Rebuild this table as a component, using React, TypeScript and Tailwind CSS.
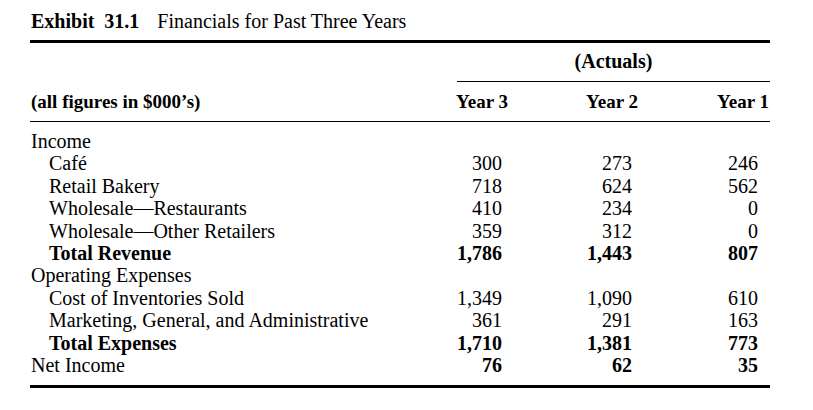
import React from 'react';

/* ---------- Data -------------------------------------------------- */
type Row = {
  label: string;
  indent?: boolean;
  boldLabel?: boolean;
  boldValues?: boolean;
  values?: [string, string, string];
};

const rows: Row[] = [
  { label: 'Income' },
  { label: 'Café', indent: true, values: ['300', '273', '246'] },
  { label: 'Retail Bakery', indent: true, values: ['718', '624', '562'] },
  { label: 'Wholesale—Restaurants', indent: true, values: ['410', '234', '0'] },
  { label: 'Wholesale—Other Retailers', indent: true, values: ['359', '312', '0'] },
  { label: 'Total Revenue', indent: true, boldLabel: true, boldValues: true, values: ['1,786', '1,443', '807'] },
  { label: 'Operating Expenses' },
  { label: 'Cost of Inventories Sold', indent: true, values: ['1,349', '1,090', '610'] },
  { label: 'Marketing, General, and Administrative', indent: true, values: ['361', '291', '163'] },
  { label: 'Total Expenses', indent: true, boldLabel: true, boldValues: true, values: ['1,710', '1,381', '773'] },
  { label: 'Net Income', boldValues: true, values: ['76', '62', '35'] },
];

// right padding per value column (Year 3, Year 2, Year 1)
const valuePad = ['pr-[7px]', 'pr-[7px]', 'pr-[12px]'];

/* ---------- Component -------------------------------------------- */
export default function App() {
  return (
    <div className="w-[813px] h-[410px] bg-white text-black font-['Liberation_Serif',serif] text-[20px] leading-[22px]">
      <div className="ml-[30px] w-[740px] pt-[10px]">
        {/* title */}
        <div className="pl-[1px]">
          <span className="font-bold">Exhibit&nbsp; 31.1</span>
          <span className="ml-[18px]">Financials for Past Three Years</span>
        </div>
        <div className="mt-[8px] h-[3px] bg-black" />

        {/* header */}
        <div className="grid grid-cols-[427px_52px_130px_131px]">
          <div className="col-start-2 col-span-3 mt-[7px] pb-[9px] border-b border-black text-center font-bold">
            (Actuals)
          </div>
        </div>
        <div className="grid grid-cols-[427px_52px_130px_131px] pt-[9px] pb-[8px] border-b border-black font-bold text-[19px]">
          <div className="pl-[1px]">(all figures in $000’s)</div>
          <div className="flex justify-end whitespace-nowrap pr-[1px]">Year 3</div>
          <div className="flex justify-end pr-[1px]">Year 2</div>
          <div className="flex justify-end pr-[1px]">Year 1</div>
        </div>

        {/* body */}
        <div className="pt-[8px] pb-[9px] leading-[22.4px]">
          {rows.map((r) => (
            <div key={r.label} className="grid grid-cols-[427px_52px_130px_131px]">
              <div className={`${r.indent ? 'pl-[19px]' : 'pl-[1px]'} ${r.boldLabel ? 'font-bold' : ''}`}>
                {r.label}
              </div>
              {r.values
                ? r.values.map((v, i) => (
                    <div
                      key={i}
                      className={`text-right ${valuePad[i]} ${r.boldValues ? 'font-bold' : ''}`}
                    >
                      {v}
                    </div>
                  ))
                : null}
            </div>
          ))}
        </div>
        <div className="h-[3px] bg-black" />
      </div>
    </div>
  );
}
